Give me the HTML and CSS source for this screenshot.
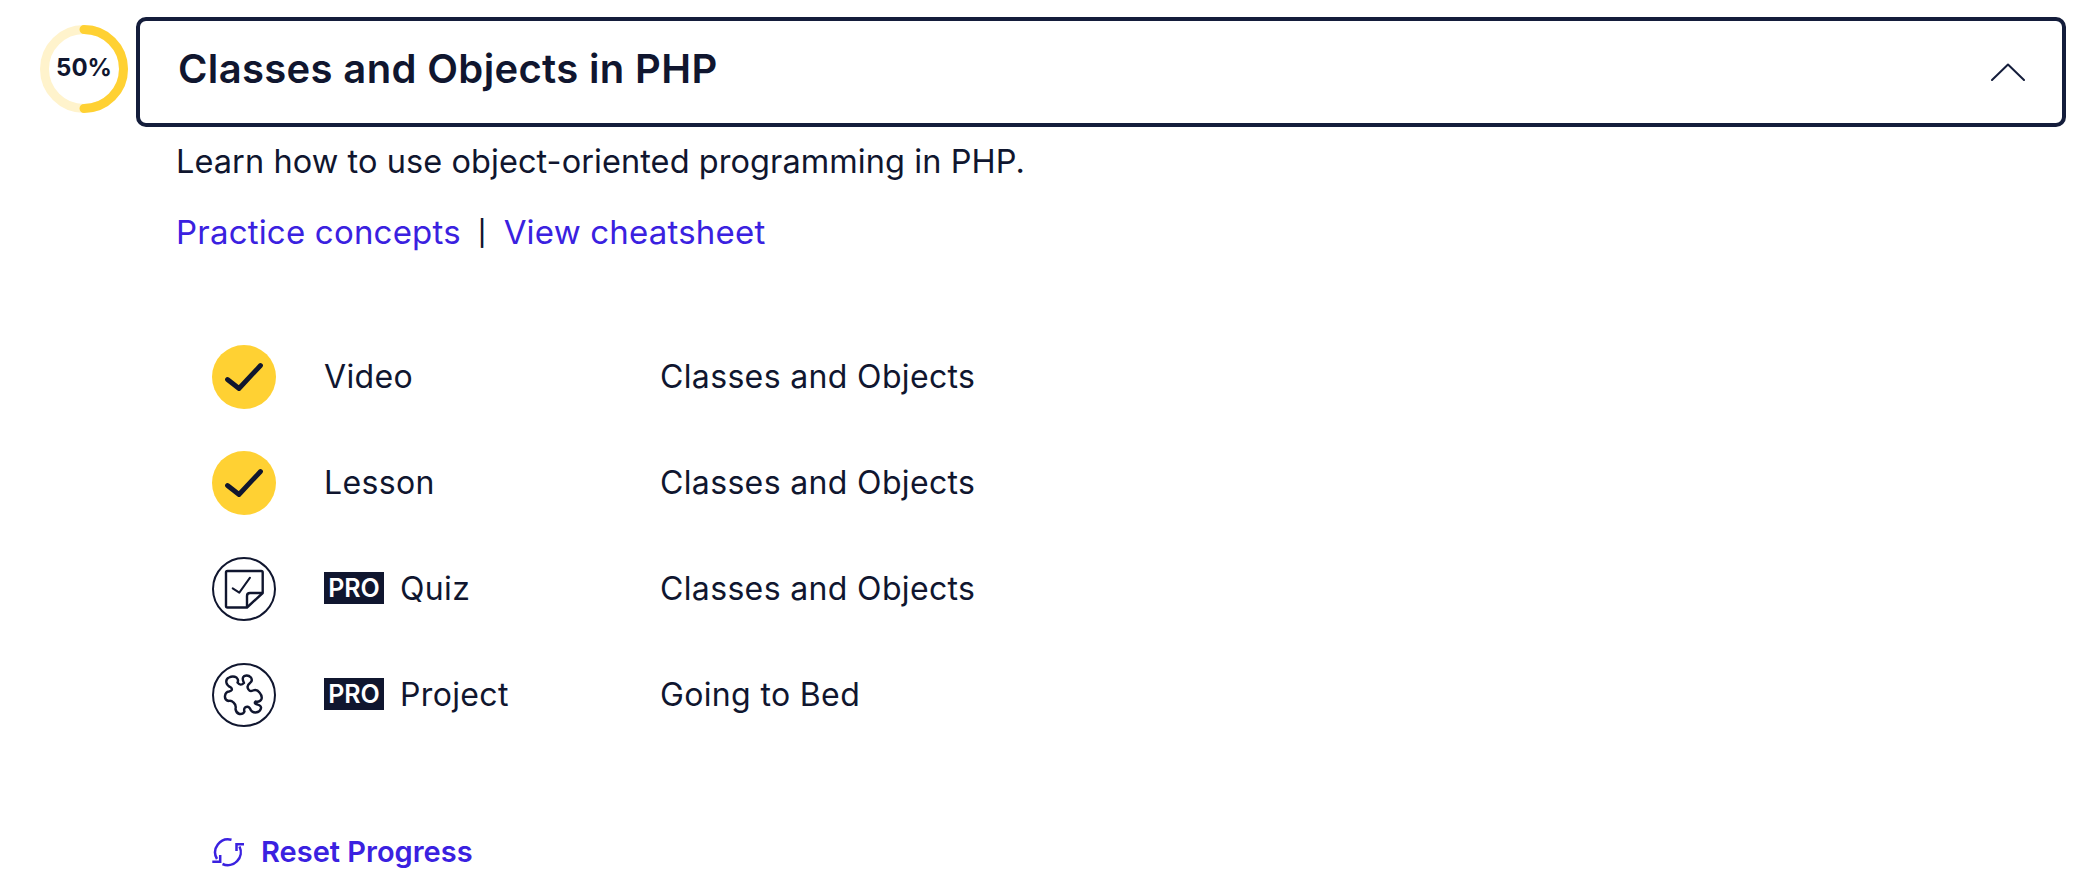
FILE: index.html
```html
<!DOCTYPE html>
<html lang="en">
<head>
<meta charset="utf-8">
<title>Classes and Objects in PHP</title>
<link rel="stylesheet" href="styles.css">
</head>
<body>
<main class="module">
  <div class="module-head">
    <div class="ring">
      <svg class="ring-svg" viewBox="0 0 88 88" width="88" height="88" aria-hidden="true">
        <circle cx="44" cy="44" r="39.5" fill="none" stroke="#fff3cc" stroke-width="9"/>
        <path d="M44 4.500A39.500 39.500 0 0 1 44 83.500" fill="none" stroke="#ffd133" stroke-width="9" stroke-linecap="round"/>
      </svg>
      <span class="ring-label">50%</span>
    </div>
    <button class="accordion" type="button">
      <span class="accordion-title">Classes and Objects in PHP</span>
      <svg class="chevron" viewBox="0 0 34 18" width="34" height="18" aria-hidden="true">
        <path d="M1 17L17 1.500L33 17" fill="none" stroke="#141d3b" stroke-width="2" stroke-linecap="round" stroke-linejoin="round"/>
      </svg>
    </button>
  </div>
  <div class="module-body">
    <p class="desc">Learn how to use object-oriented programming in PHP.</p>
    <p class="links"><a href="#">Practice concepts</a><span class="sep">|</span><a href="#">View cheatsheet</a></p>
    <ul class="items">
      <li class="item">
        <svg class="item-icon" viewBox="0 0 64 64" aria-hidden="true">
          <circle cx="32" cy="32" r="32" fill="#ffd133"/>
          <path d="M15.500 34.500L27 43.500L48.500 20.500" fill="none" stroke="#10162f" stroke-width="4.800" stroke-linecap="round" stroke-linejoin="round"/>
        </svg>
        <span class="item-type">Video</span>
        <span class="item-name">Classes and Objects</span>
      </li>
      <li class="item">
        <svg class="item-icon" viewBox="0 0 64 64" aria-hidden="true">
          <circle cx="32" cy="32" r="32" fill="#ffd133"/>
          <path d="M15.500 34.500L27 43.500L48.500 20.500" fill="none" stroke="#10162f" stroke-width="4.800" stroke-linecap="round" stroke-linejoin="round"/>
        </svg>
        <span class="item-type">Lesson</span>
        <span class="item-name">Classes and Objects</span>
      </li>
      <li class="item">
        <svg class="item-icon" viewBox="0 0 64 64" aria-hidden="true">
          <circle cx="32" cy="32" r="31" fill="none" stroke="#10162f" stroke-width="2"/>
          <path d="M35 50.500H15.500Q14 50.500 14 49V15.500Q14 14 15.500 14H49.200Q50.700 14 50.700 15.500V36Z" fill="none" stroke="#10162f" stroke-width="2.400" stroke-linejoin="round"/>
          <path d="M50 36H38Q35 36 35 39V50" fill="none" stroke="#10162f" stroke-width="2.400" stroke-linejoin="round"/>
          <path d="M20.700 31.300L27.300 35.700L38 20.700" fill="none" stroke="#10162f" stroke-width="2" stroke-linecap="round" stroke-linejoin="round"/>
        </svg>
        <span class="item-type"><span class="pro">PRO</span>Quiz</span>
        <span class="item-name">Classes and Objects</span>
      </li>
      <li class="item">
        <svg class="item-icon" viewBox="0 0 64 64" aria-hidden="true">
          <circle cx="32" cy="32" r="31" fill="none" stroke="#10162f" stroke-width="2"/>
          <path d="M14.500 20Q13.500 16 17 14.500Q21 12.500 24.500 14.500Q27 17 25.500 19.500Q28.500 23.500 32 20Q29.500 15 32 13.200Q36 11.500 39 14.500Q41 18 38 20Q34 23 36.500 26.500Q38 29 41 27.500Q45 26 47.500 29.500Q50.500 33 49.500 36Q48 39.500 43.500 38.500Q41.500 40.500 45.500 41.500Q49.500 43 49 45Q48.500 49 43.500 49.500Q39.500 49.500 38 45.500Q36 42.500 33 44.500Q31.500 46.500 32.500 48.500Q31 51.500 27.500 51Q24 50 23.500 46Q24.500 42 21.500 39.500Q19 37 16.500 38Q12.500 37 13 33Q13.500 29 17 28.500Q21.500 27.500 19 24.500Q15 22.500 14.500 20Z" fill="none" stroke="#10162f" stroke-width="2.400" stroke-linejoin="round"/>
        </svg>
        <span class="item-type"><span class="pro">PRO</span>Project</span>
        <span class="item-name">Going to Bed</span>
      </li>
    </ul>
    <a class="reset" href="#">
      <svg class="reset-icon" viewBox="0 0 32 32" width="32" height="32" aria-hidden="true">
        <path d="M19.500 3.800A13 13 0 0 0 5 23" fill="none" stroke="#3a21e0" stroke-width="2.500"/>
        <path d="M27.500 10.500A13 13 0 0 1 10.500 28" fill="none" stroke="#3a21e0" stroke-width="2.500"/>
        <path d="M0.300 25.700H8.200V19" fill="none" stroke="#3a21e0" stroke-width="2.500"/>
        <path d="M32 8.300H24.500V15" fill="none" stroke="#3a21e0" stroke-width="2.500"/>
      </svg>
      <span>Reset Progress</span>
    </a>
  </div>
</main>
</body>
</html>
```
FILE: styles.css
```css
* { box-sizing: border-box; }
html, body { margin: 0; background: #fff; }
body {
  height: 892px;
  overflow: hidden;
  color: #10162f;
  font-family: "Inter", "Noto Sans", "Liberation Sans", sans-serif;
}
.module { padding: 17px 32px 0 40px; }
.module-head { display: flex; align-items: flex-start; gap: 8px; }
.ring { position: relative; width: 88px; height: 88px; flex: none; margin-top: 8px; }
.ring-svg { display: block; }
.ring-label {
  position: absolute;
  inset: 0;
  display: flex;
  align-items: center;
  justify-content: center;
  font-size: 24px;
  font-weight: 700;
  padding-bottom: 3px;
}
.accordion {
  flex: 1;
  height: 110px;
  display: flex;
  align-items: center;
  justify-content: space-between;
  padding: 0 37px 8px 38px;
  background: #fff;
  border: 4px solid #141d3b;
  border-radius: 10px;
  color: inherit;
  font: inherit;
}
.accordion-title { font-size: 40px; font-weight: 600; letter-spacing: 0.35px; }
.chevron { display: block; margin-top: 8px; }
.module-body { padding-left: 136px; }
.desc { margin: 13px 0 0; font-size: 32.5px; line-height: 44px; letter-spacing: 0.07px; }
.links { margin: 26px 0 0; font-size: 33px; line-height: 44px; letter-spacing: 0.2px; }
.links a { color: #3a21e0; text-decoration: none; }
.sep { margin: 0 17px; font-size: 25px; font-weight: 500; line-height: 0; vertical-align: 2px; }
.items { list-style: none; margin: 91px 0 0; padding: 0 0 0 36px; display: flex; flex-direction: column; gap: 42px; }
.item { display: flex; align-items: center; height: 64px; font-size: 32px; line-height: 40px; letter-spacing: 0.35px; }
.item-icon { width: 64px; height: 64px; flex: none; }
.item-type { width: 336px; margin-left: 48px; display: flex; align-items: center; }
.pro {
  width: 60px;
  height: 32px;
  margin: -3px 16px 0 0;
  background: #10162f;
  color: #fff;
  font-size: 25px;
  font-weight: 600;
  letter-spacing: 0;
  line-height: 32px;
  text-align: center;
}
.reset { display: inline-flex; align-items: center; gap: 17px; margin: 105px 0 0 36px; color: #3a21e0; text-decoration: none; font-size: 29px; font-weight: 600; line-height: 40px; }
.reset-icon { display: block; flex: none; }
```
